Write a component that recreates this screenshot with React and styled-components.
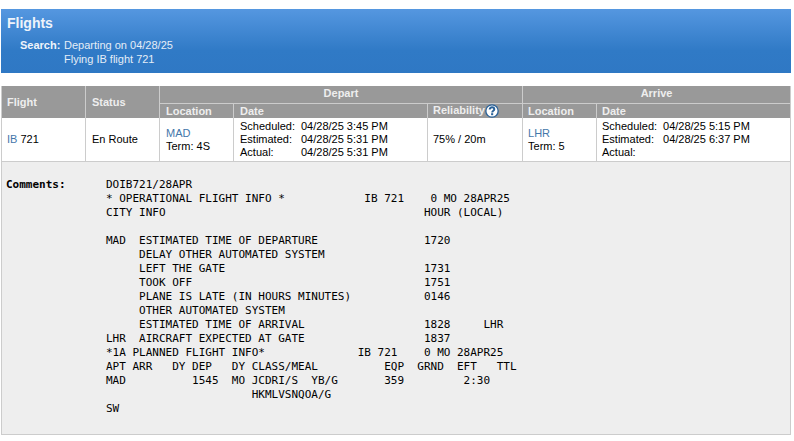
import styled, { createGlobalStyle } from "styled-components";

const GlobalStyle = createGlobalStyle`
  html, body {
    margin: 0;
    padding: 0;
    background: #fff;
    overflow: hidden;
  }
  body {
    font-family: "Liberation Sans", Arial, sans-serif;
    font-size: 11px;
    color: #000;
  }
`;

const comments = `DOIB721/28APR
* OPERATIONAL FLIGHT INFO *            IB 721    0 MO 28APR25
CITY INFO                                       HOUR (LOCAL)

MAD  ESTIMATED TIME OF DEPARTURE                1720
     DELAY OTHER AUTOMATED SYSTEM
     LEFT THE GATE                              1731
     TOOK OFF                                   1751
     PLANE IS LATE (IN HOURS MINUTES)           0146
     OTHER AUTOMATED SYSTEM
     ESTIMATED TIME OF ARRIVAL                  1828     LHR
LHR  AIRCRAFT EXPECTED AT GATE                  1837
*1A PLANNED FLIGHT INFO*              IB 721    0 MO 28APR25
APT ARR   DY DEP   DY CLASS/MEAL          EQP  GRND  EFT   TTL
MAD          1545  MO JCDRI/S  YB/G       359         2:30
                      HKMLVSNQOA/G
SW
`;

const Times = ({ rows }) => (
  <DateGrid>
    {rows.map(([label, value]) => (
      <DateRow key={label}>
        <DateLabel>{label}</DateLabel>
        <span>{value}</span>
      </DateRow>
    ))}
  </DateGrid>
);

const HelpIcon = () => (
  <HelpSvg width="14" height="14" viewBox="0 0 14 14">
    <circle cx="7" cy="7" r="6.8" fill="#2a6299" />
    <circle cx="7" cy="7" r="5.5" fill="#fff" />
    <path
      d="M4.7 5.6C4.7 4.2 5.7 3.3 7 3.3C8.3 3.3 9.3 4.1 9.3 5.3C9.3 6.8 7.2 6.8 7.2 8.4"
      fill="none"
      stroke="#2a6299"
      strokeWidth="2"
    />
    <rect x="6.1" y="9.2" width="2.1" height="2" fill="#2a6299" />
  </HelpSvg>
);

export default function App() {
  return (
    <>
      <GlobalStyle />
      <Page>
        <Banner>
          <Title>Flights</Title>
          <SearchRow>
            <SearchLabel>Search:</SearchLabel>
            <div>
              <div>Departing on 04/28/25</div>
              <div>Flying IB flight 721</div>
            </div>
          </SearchRow>
        </Banner>
        <FlightTable>
          <colgroup>
            <col style={{ width: 84 }} />
            <col style={{ width: 74 }} />
            <col style={{ width: 74 }} />
            <col style={{ width: 194 }} />
            <col style={{ width: 95 }} />
            <col style={{ width: 74 }} />
            <col style={{ width: 194 }} />
          </colgroup>
          <thead>
            <tr>
              <HeadCell rowSpan={2} $pad={5}>Flight</HeadCell>
              <HeadCell rowSpan={2}>Status</HeadCell>
              <GroupCell colSpan={3}>Depart</GroupCell>
              <GroupCell colSpan={2}>Arrive</GroupCell>
            </tr>
            <tr>
              <SubCell>Location</SubCell>
              <SubCell>Date</SubCell>
              <SubCell $pad={5}>
                <Reliability>
                  Reliability
                  <HelpIcon />
                </Reliability>
              </SubCell>
              <SubCell $pad={5}>Location</SubCell>
              <SubCell $pad={5}>Date</SubCell>
            </tr>
          </thead>
          <tbody>
            <tr>
              <BodyCell $pad={5}>
                <Code>IB</Code> 721
              </BodyCell>
              <BodyCell>En Route</BodyCell>
              <LocationCell>
                <Code>MAD</Code>
                <br />
                Term: 4S
              </LocationCell>
              <BodyCell>
                <Times
                  rows={[
                    ["Scheduled:", "04/28/25 3:45 PM"],
                    ["Estimated:", "04/28/25 5:31 PM"],
                    ["Actual:", "04/28/25 5:31 PM"],
                  ]}
                />
              </BodyCell>
              <BodyCell $pad={5}>75% / 20m</BodyCell>
              <LocationCell $pad={5}>
                <Code>LHR</Code>
                <br />
                Term: 5
              </LocationCell>
              <BodyCell $pad={5}>
                <Times
                  rows={[
                    ["Scheduled:", "04/28/25 5:15 PM"],
                    ["Estimated:", "04/28/25 6:37 PM"],
                    ["Actual:", ""],
                  ]}
                />
              </BodyCell>
            </tr>
            <tr>
              <CommentCell colSpan={7}>
                <CommentWrap>
                  <CommentLabel>Comments:</CommentLabel>
                  <CommentText>{comments}</CommentText>
                </CommentWrap>
              </CommentCell>
            </tr>
          </tbody>
        </FlightTable>
      </Page>
    </>
  );
}

const Page = styled.div`
  width: 794px;
  height: 441px;
  padding: 9px 0 0 1px;
  box-sizing: border-box;
`;

const Banner = styled.div`
  width: 790px;
  height: 64px;
  box-sizing: border-box;
  padding: 6px 6px 0;
  color: #e4edf7;
  background: linear-gradient(to bottom, #5597e0 0%, #307ac6 65%, #2f78c4 100%);
`;

const Title = styled.div`
  font-size: 14px;
  line-height: 16px;
  font-weight: bold;
  color: #eef3fa;
`;

const SearchRow = styled.div`
  display: flex;
  margin-top: 7px;
  padding-left: 13px;
  line-height: 14px;
`;

const SearchLabel = styled.div`
  width: 44px;
  font-weight: bold;
  color: #eef3fa;
`;

const FlightTable = styled.table`
  width: 790px;
  margin-top: 13px;
  table-layout: fixed;
  border-collapse: collapse;
  border-style: none solid solid;
  border-width: 1px;
  border-color: #ccc;
`;

const HeadCell = styled.th`
  background: #999;
  color: #eee;
  font-size: 11px;
  font-weight: bold;
  text-align: left;
  padding: 0 6px 0 ${(p) => p.$pad ?? 6}px;
  border-left: 1px solid #ccc;
`;

const GroupCell = styled(HeadCell)`
  height: 17px;
  text-align: center;
  padding: 0 0 2px;
  box-sizing: border-box;
  border-bottom: 1px solid #ccc;
`;

const SubCell = styled(HeadCell)`
  height: 14px;
  line-height: 13px;
  vertical-align: bottom;
`;

const Reliability = styled.span`
  display: flex;
  height: 14px;
  line-height: 12px;
`;

const HelpSvg = styled.svg`
  flex: none;
`;

const BodyCell = styled.td`
  height: 43px;
  padding: 0 6px 0 ${(p) => p.$pad ?? 6}px;
  line-height: 13px;
  vertical-align: middle;
  border-left: 1px solid #ccc;
  border-bottom: 1px solid #ccc;
`;

const LocationCell = styled(BodyCell)`
  height: 41px;
  padding-top: 2px;
`;

const Code = styled.span`
  color: #4477aa;
`;

const DateGrid = styled.div`
  display: flex;
  flex-direction: column;
`;

const DateRow = styled.div`
  display: flex;
`;

const DateLabel = styled.span`
  width: 61px;
`;

const CommentCell = styled.td`
  background: #eee;
  padding: 0;
  height: 272px;
  vertical-align: top;
`;

const CommentWrap = styled.div`
  display: flex;
  padding: 16px 0 0 4px;
  font-family: "DejaVu Sans Mono", monospace;
  font-size: 11px;
  line-height: 14px;
`;

const CommentLabel = styled.div`
  width: 100px;
  font-weight: bold;
`;

const CommentText = styled.pre`
  margin: 0;
  font: inherit;
`;
